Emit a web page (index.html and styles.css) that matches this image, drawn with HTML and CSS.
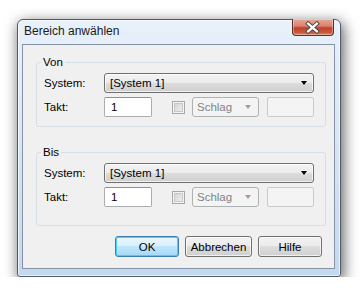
FILE: index.html
```html
<!DOCTYPE html>
<html lang="de">
<head>
    <meta charset="UTF-8">
    <title>Bereich anwählen</title>
    <link rel="stylesheet" href="styles.css">
</head>
<body>
    <div class="window">
        <div class="titlebar">
            <span class="title">Bereich anwählen</span>
            <div class="close">
                <svg width="42" height="17" viewBox="0 0 42 17">
                    <path d="M16.5 4.5 L25.5 12.5 M25.5 4.5 L16.5 12.5" stroke="#4a4a4a" stroke-width="4.2" stroke-linecap="square" fill="none"/>
                    <path d="M16.5 4.5 L25.5 12.5 M25.5 4.5 L16.5 12.5" stroke="#ffffff" stroke-width="2.2" stroke-linecap="square" fill="none"/>
                </svg>
            </div>
        </div>
        <div class="client">
            <fieldset class="group">
                <legend>Von</legend>
                <div class="row">
                    <span class="label">System:</span>
                    <div class="combo wide">[System 1]<span class="arrow"></span></div>
                </div>
                <div class="row">
                    <span class="label">Takt:</span>
                    <div class="edit">1</div>
                    <span class="check"></span>
                    <div class="combo small disabled">Schlag<span class="arrow"></span></div>
                    <div class="edit disabled"></div>
                </div>
            </fieldset>

            <fieldset class="group second">
                <legend>Bis</legend>
                <div class="row">
                    <span class="label">System:</span>
                    <div class="combo wide">[System 1]<span class="arrow"></span></div>
                </div>
                <div class="row">
                    <span class="label">Takt:</span>
                    <div class="edit">1</div>
                    <span class="check"></span>
                    <div class="combo small disabled">Schlag<span class="arrow"></span></div>
                    <div class="edit disabled"></div>
                </div>
            </fieldset>

            <div class="buttons">
                <button class="btn default">OK</button>
                <button class="btn cancel">Abbrechen</button>
                <button class="btn">Hilfe</button>
            </div>
        </div>
    </div>
</body>
</html>
```

FILE: styles.css
```css
body {
    margin: 0;
    background-color: #ffffff;
    font-family: "Liberation Sans", Arial, sans-serif;
    font-size: 11.5px;
    color: #000000;
}

.window {
    margin: 19px 0 0 17px;
    width: 324px;
    height: 258px;
    box-sizing: border-box;
    border: 1px solid #4f5b68;
    border-radius: 6px 6px 3px 3px;
    background: linear-gradient(#e9f1fa, #c4d8ee);
    box-shadow: inset 0 0 0 1px rgba(255, 255, 255, 0.65), 2px 4px 14px 1px rgba(0, 0, 0, 0.6);
    display: flex;
    flex-direction: column;
    padding: 0 5px 7px 4px;
}

.titlebar {
    height: 24px;
    display: flex;
    align-items: flex-start;
    flex-shrink: 0;
}

.title {
    margin: 4px 0 0 2px;
    line-height: 14px;
    font-size: 12px;
    color: #1a1a1a;
}

.close {
    margin: -1px 1px 0 auto;
    width: 42px;
    height: 17px;
    box-sizing: border-box;
    border: 1px solid #5d2f28;
    border-top: none;
    border-radius: 0 0 4px 4px;
    background: linear-gradient(#e9a899 0%, #d9806b 45%, #c0412a 55%, #c85a3e 85%, #dd8a63 100%);
    box-shadow: inset 0 0 0 1px rgba(255, 255, 255, 0.35);
    display: flex;
}

.close svg {
    display: block;
    margin-left: -1px;
}

.client {
    height: 225px;
    box-sizing: border-box;
    border: 1px solid #8494a6;
    background-color: #f0f0f0;
    padding: 10px 8px 0 13px;
    display: flex;
    flex-direction: column;
}

.group {
    margin: 0;
    border: 1px solid #d5dfe5;
    border-radius: 3px;
    padding: 4px 11px 9px 7px;
    display: flex;
    flex-direction: column;
    gap: 4px;
    min-inline-size: 0;
}

.group legend {
    padding: 0 2px;
    margin-left: -3px;
    line-height: 14px;
}

.group.second {
    margin-top: 18px;
    padding-bottom: 18px;
}

.row {
    display: flex;
    align-items: center;
    height: 20px;
}

.label {
    width: 60px;
    flex-shrink: 0;
}

.combo {
    height: 20px;
    box-sizing: border-box;
    border: 1px solid #707070;
    border-radius: 3px;
    background: linear-gradient(#f3f3f3 0%, #ebebeb 50%, #dddddd 50%, #cfcfcf 100%);
    box-shadow: inset 0 0 0 1px rgba(255, 255, 255, 0.7);
    display: flex;
    align-items: center;
    padding: 0 6px 0 5px;
}

.combo.wide {
    width: 210px;
}

.combo.small {
    width: 67px;
    margin-left: 7px;
    padding-left: 4px;
}

.arrow {
    margin-left: auto;
    width: 0;
    height: 0;
    border-left: 3.5px solid transparent;
    border-right: 3.5px solid transparent;
    border-top: 4px solid #000000;
}

.combo.disabled {
    border-color: #adb2b5;
    background: #f4f4f4;
    box-shadow: none;
    color: #838383;
}

.combo.disabled .arrow {
    border-top-color: #a0a0a0;
    margin-right: 1px;
}

.edit {
    width: 48px;
    height: 20px;
    box-sizing: border-box;
    border: 1px solid #abadb3;
    border-top-color: #8e9298;
    border-radius: 2px;
    background-color: #ffffff;
    padding-left: 6px;
    line-height: 18px;
}

.edit.disabled {
    width: 47px;
    margin-left: 8px;
    border-color: #c9cbcf;
    background-color: #f4f4f4;
}

.check {
    margin-left: 20px;
    width: 13px;
    height: 13px;
    box-sizing: border-box;
    border: 1px solid #a8a8a8;
    background: linear-gradient(135deg, #d0d0d0, #f2f2f2);
    box-shadow: inset 0 0 0 1px #f4f4f4, inset 0 0 0 2px #c8c8c8;
}

.buttons {
    margin-top: 10px;
    padding-right: 4px;
    display: flex;
    justify-content: flex-end;
    gap: 6px;
}

.btn {
    width: 64px;
    height: 21px;
    box-sizing: border-box;
    border: 1px solid #707070;
    border-radius: 3px;
    background: linear-gradient(#f2f2f2 0%, #ebebeb 50%, #dddddd 50%, #cfcfcf 100%);
    box-shadow: inset 0 0 0 1px rgba(255, 255, 255, 0.7);
    font-family: inherit;
    font-size: 11.5px;
    color: #000000;
    padding: 0;
}

.btn.cancel {
    width: 67px;
}

.btn.default {
    border-color: #3c7fb1;
    background: linear-gradient(#eaf6fd 0%, #d9f0fc 50%, #bee6fd 50%, #a7d9f5 100%);
    box-shadow: inset 0 0 0 1px #48d0f9;
}
```
